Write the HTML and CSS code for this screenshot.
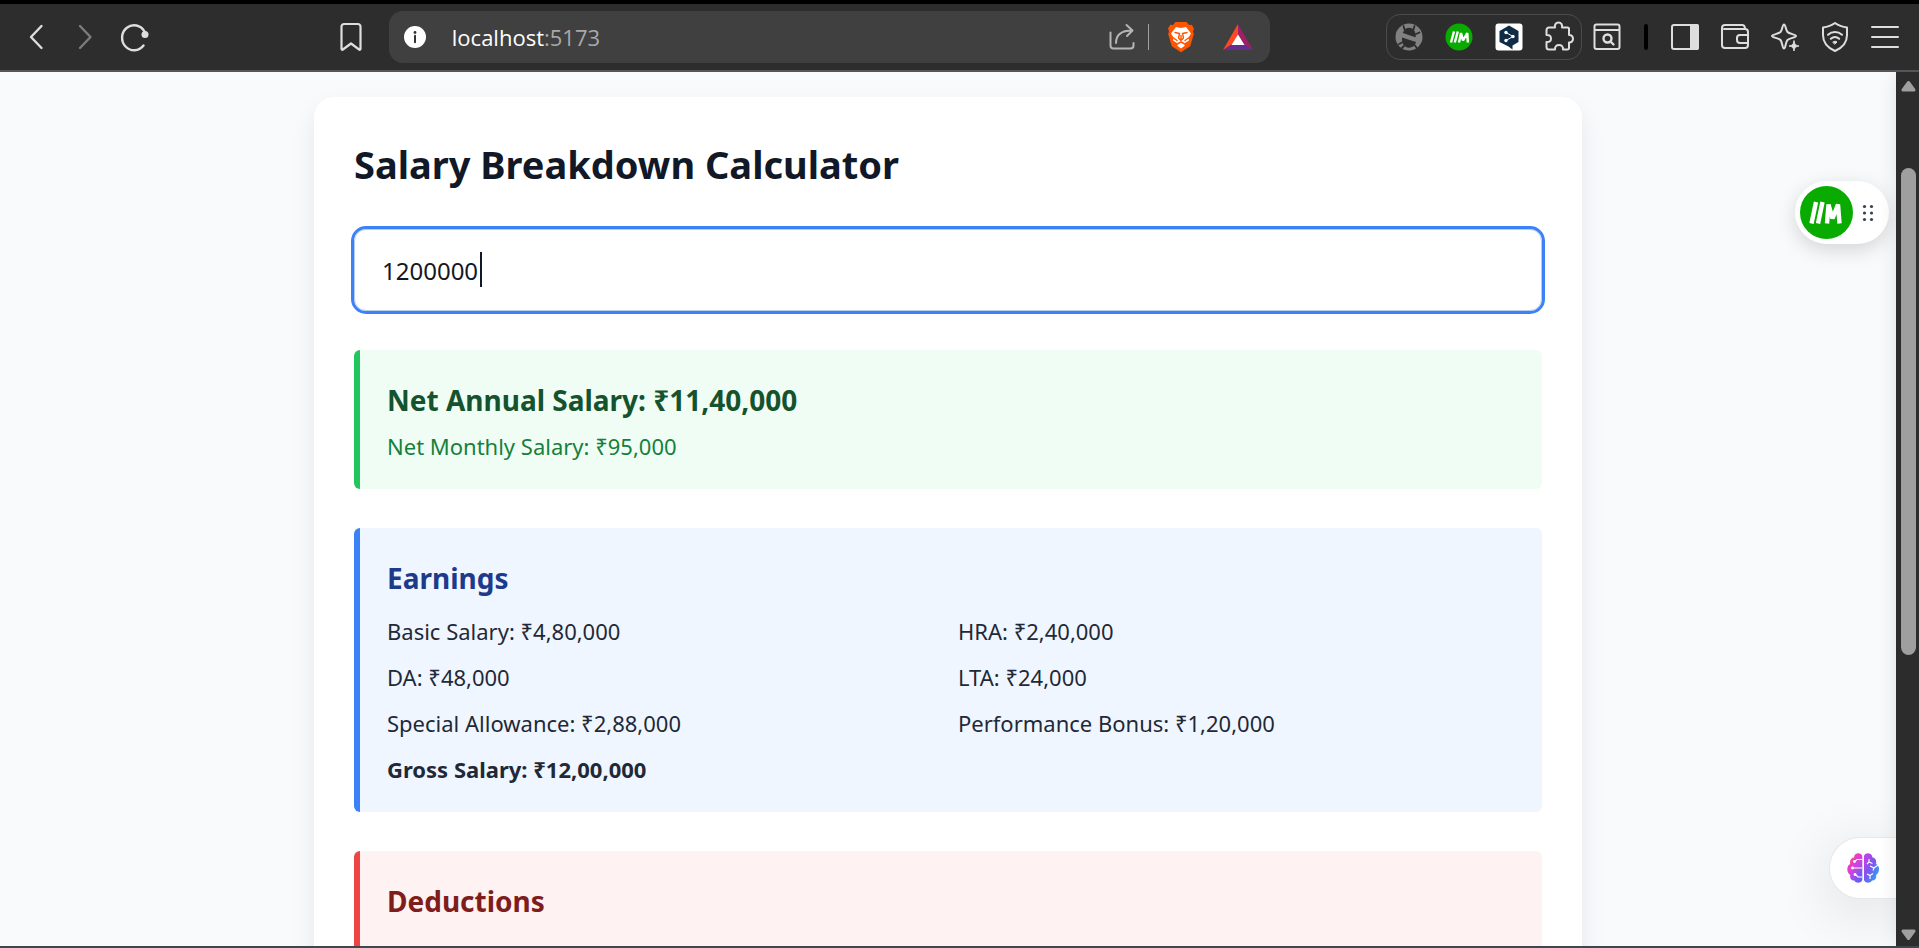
FILE: index.html
```html
<!DOCTYPE html>
<html lang="en">
<head>
<meta charset="utf-8">
<title>Salary Breakdown Calculator</title>
<link rel="stylesheet" href="styles.css">
</head>
<body>
<div class="browser">
  <header class="toolbar">
    <nav class="nav-group" aria-label="Navigation">
      <button class="icon-btn" aria-label="Back"><svg viewBox="0 0 28 28"><path d="M19.500 3 9 14l10.500 11" stroke-width="2.400"/></svg></button>
      <button class="icon-btn dim" aria-label="Forward"><svg viewBox="0 0 28 28"><path d="M9 3l10.500 11L9 25" stroke-width="2.400"/></svg></button>
      <button class="icon-btn" aria-label="Reload"><svg viewBox="0 0 28 28"><path d="M24.500 8.500A12 12.500 0 1 0 23.500 22.500" stroke-width="2.400"/><circle cx="25" cy="11.500" r="3.500" class="solid" stroke="none"/></svg></button>
    </nav>
    <span class="space-left"></span>
    <button class="icon-btn" aria-label="Bookmark"><svg viewBox="0 0 28 28"><path d="M4.500 3.500a2.500 2.500 0 0 1 2.500-2.500h14a2.500 2.500 0 0 1 2.500 2.500V26a.8.8 0 0 1-1.400.5L14 20.500l-8.100 6a.8.8 0 0 1-1.400-.5z" stroke-width="2.200"/></svg></button>
    <div class="address">
      <button class="info" aria-label="Site information"><svg viewBox="0 0 22 22"><circle cx="11" cy="11" r="11" fill="#fff" stroke="none"/><circle cx="11" cy="6.500" r="1.400" fill="#333" stroke="none"/><path d="M11 9.800v6.400" stroke="#333" stroke-width="2"/></svg></button>
      <span class="url">localhost<span class="port">:5173</span></span>
      <button class="icon-btn share" aria-label="Share"><svg viewBox="0 0 28 28"><path d="M2.500 9.500v13a3 3 0 0 0 3 3h17a3 3 0 0 0 3-3v-2.500M8 20c0-8 5-12.500 16-12.500M18.500 2l6 5.500-5.500 5.500"/></svg></button>
      <span class="divider"></span>
      <button class="icon-btn brave" aria-label="Shields"><svg viewBox="0 0 28 32"><path d="M8.500 1h11l2.500 3 2.800-.3 2.200 4-1 2.500.8 3-3.600 12-9.200 6-9.200-6-3.600-12 .8-3-1-2.500 2.200-4L6 4z" fill="#ff5500" stroke="none"/><path d="M9 6l5 1 5-1 5 6.500-2.500 4 .5 3-5.500 3.500 1.500 1.500-4 3-4-3 1.500-1.500L6 19.500l.5-3-2.500-4z" fill="#fff" stroke="none"/><path d="M8 11.500l4.500 1-1 4.500 2.500 2.500 2.500-2.500-1-4.500 4.500-1M6.500 17l3.500 2.500M21.500 17 18 19.500M11 22.500l3-1.500 3 1.500M14 14.500v5" stroke="#ff5500" stroke-width="1.400"/></svg></button>
      <button class="icon-btn bat" aria-label="Rewards"><svg viewBox="0 0 30 28"><path d="M15 1v11L9 22l-9 5z" fill="#ff4724" stroke="none"/><path d="M15 1v11l6 10 9 5z" fill="#9e1f63" stroke="none"/><path d="M0 27l9-6h12l9 6z" fill="#662d91" stroke="none"/><path d="M15 11.500 21.500 22h-13z" fill="#fff" stroke="none"/></svg></button>
    </div>
    <span class="space-right"></span>
    <div class="extensions">
      <button class="icon-btn" aria-label="Blocked tracker"><svg viewBox="0 0 28 28"><circle cx="14" cy="14" r="13.500" fill="#818181" stroke="none"/><path d="M8.500 8.500C9.500 6 11.500 4.800 14 4.800s5 1.500 6 4.200c.8 1.800 1 4 .5 5.500L7.500 11c0-.9.400-1.700 1-2.500zM7 14.500l14 4.500c-.8 3.500-3.500 5.700-7 5.700-4.500 0-7.500-4-7-10.200z" fill="#2d2d2d" stroke="none"/><path d="M9.500 6.500 8.500 3M18.500 6.500l1-3.500M7 19.500l-3 1.500M9 23l-2 2M19.500 22l2 2.500M21 11l3.500-1.500" stroke="#2d2d2d" stroke-width="1.800"/><path d="M2.500 9.500l23 8" stroke="#818181" stroke-width="2.400"/></svg></button>
      <button class="icon-btn" aria-label="Interview assistant"><svg viewBox="0 0 28 28"><circle cx="14" cy="14" r="13.500" fill="#09ab00" stroke="none"/><path d="M6 19.500 9 8.500M9.800 19.500l3-11M14 19.500l2-9.500 2 7.500 4.300-7.500.5 9.500" class="mark" stroke-width="2.400"/></svg></button>
      <button class="icon-btn" aria-label="Translate"><svg viewBox="0 0 28 28"><rect x=".5" y=".5" width="27" height="27" rx="3" fill="#fff" stroke="none"/><path d="M14 2.500l9.500 5.500v11L17.500 22.500V26.500l-4-3L4.500 19V8z" fill="#0f2b46" stroke="none"/><path d="M11 9.500l7 4-7 4" stroke="#fff" stroke-width="1"/><g fill="#fff" stroke="none"><circle cx="11" cy="9.500" r="1.700"/><circle cx="18" cy="13.500" r="1.700"/><circle cx="11" cy="17.500" r="1.700"/></g></svg></button>
      <button class="icon-btn" aria-label="Extensions"><svg viewBox="0 0 28 28"><path d="M4 4.500h6c-.6-3 1-5 3.500-5s4.100 2 3.500 5h5.500a1.500 1.500 0 0 1 1.500 1.500v6c2.500-.2 4 1.400 4 3.700s-1.500 4-4 3.800V25a1.500 1.500 0 0 1-1.500 1.500H18c.3-3-1.500-4.500-4-4.500s-4.200 1.500-4 4.500H4A2.500 2.500 0 0 1 1.500 24v-5c3 .3 4.500-1.200 4.500-3.500S4.500 11.700 1.500 12V7A2.500 2.500 0 0 1 4 4.500z"/></svg></button>
    </div>
    <div class="actions">
      <button class="icon-btn" aria-label="Search page"><svg viewBox="0 0 28 28"><rect x="1.500" y="1.500" width="25" height="24.500" rx="2"/><path d="M2 7h24"/><circle cx="14.500" cy="15.500" r="4" stroke-width="2.400"/><path d="M17.500 18.500l3 3" stroke-width="2.400"/></svg></button>
      <span class="black-bar"></span>
      <button class="icon-btn" aria-label="Sidebar"><svg viewBox="0 0 28 28"><rect x="1" y="2" width="26" height="24" rx="2"/><path d="M20 2h6a1 1 0 0 1 1 1v22a1 1 0 0 1-1 1h-6z" class="solid"/></svg></button>
      <button class="icon-btn" aria-label="Wallet"><svg viewBox="0 0 28 28"><path d="M24 6c0-2.500-1-4-3-4H4a3 3 0 0 0-3 3v17a3 3 0 0 0 3 3h20a3 3 0 0 0 3-3V9a3 3 0 0 0-3-3H3M26.500 12H19a3 3 0 0 0-3 3v2a3 3 0 0 0 3 3h7.500"/></svg></button>
      <button class="icon-btn" aria-label="Assistant"><svg viewBox="0 0 28 28"><path d="M13 1.500c1.600 0 1.700 5.500 3.500 7.500s8.500 2.400 8.500 4-6.500 2-8.500 4-1.900 8.500-3.500 8.500-1.700-6.500-3.500-8.500-8.500-2.400-8.500-4S7.500 11 9.500 9 11.400 1.500 13 1.500z"/><path d="M23 17.500c.8 4 1.500 4.700 5.500 5.500-4 .8-4.700 1.500-5.500 5.500-.8-4-1.500-4.700-5.500-5.500 4-.8 4.700-1.500 5.500-5.500z" stroke="#2d2d2d" stroke-width="3"/><path d="M23 18c.8 3.800 1.400 4.200 5 5-3.600.8-4.200 1.200-5 5-.8-3.800-1.400-4.200-5-5 3.600-.8 4.200-1.200 5-5z" class="solid" stroke-width="1"/></svg></button>
      <button class="icon-btn" aria-label="VPN"><svg viewBox="0 0 28 28"><path d="M14 0c3.500 2.600 7.500 4 12 4.500V12c0 7.500-5 13-12 16C7 25 2 19.500 2 12V4.500C6.500 4 10.500 2.600 14 0z"/><path d="M7 11.800c4-3.600 10-3.600 14 0M9.800 15.800c2.500-2.200 5.900-2.200 8.400 0" stroke-width="2"/><path d="M12 19c1.200-1 2.800-1 4 0l-2 2z" class="solid" stroke-width="1"/></svg></button>
      <button class="icon-btn" aria-label="Menu"><svg viewBox="0 0 28 28"><path d="M1 4h26M1 14h26M1 24h26"/></svg></button>
    </div>
  </header>

  <div class="viewport">
    <main class="page">
      <div class="card">
        <h1 class="title">Salary Breakdown Calculator</h1>
        <div class="field">
          <input class="ctc" type="text" inputmode="numeric" aria-label="Annual CTC" value="1200000">
          <span class="caret"></span>
        </div>
        <section class="panel net">
          <h2 class="heading">Net Annual Salary: ₹11,40,000</h2>
          <p class="line">Net Monthly Salary: ₹95,000</p>
        </section>
        <section class="panel earnings">
          <h2 class="heading">Earnings</h2>
          <div class="grid">
            <p class="line">Basic Salary: ₹4,80,000</p>
            <p class="line">HRA: ₹2,40,000</p>
            <p class="line">DA: ₹48,000</p>
            <p class="line">LTA: ₹24,000</p>
            <p class="line">Special Allowance: ₹2,88,000</p>
            <p class="line">Performance Bonus: ₹1,20,000</p>
            <p class="line total">Gross Salary: ₹12,00,000</p>
          </div>
        </section>
        <section class="panel deductions">
          <h2 class="heading">Deductions</h2>
        </section>
      </div>
    </main>

    <div class="float-pill">
      <button class="float-logo" aria-label="Open interview assistant"><svg viewBox="0 0 53 53"><circle cx="26.500" cy="26.500" r="26.500" fill="#09ab00"/><path d="M11.500 37.500 16 16M18 37.500 22.500 16M27 37.500l1.500-19 4 14L38 18.500l1.500 19" class="mark" stroke-width="4.400"/></svg></button>
      <svg class="grip" viewBox="0 0 12 18"><g fill="#374151"><circle cx="2.500" cy="2.500" r="1.600"/><circle cx="9.500" cy="2.500" r="1.600"/><circle cx="2.500" cy="9" r="1.600"/><circle cx="9.500" cy="9" r="1.600"/><circle cx="2.500" cy="15.500" r="1.600"/><circle cx="9.500" cy="15.500" r="1.600"/></g></svg>
    </div>

    <button class="brain" aria-label="Open AI helper">
      <svg viewBox="0 0 32 30">
        <defs><linearGradient id="bl" x1="0" y1="0" x2=".7" y2="1"><stop offset=".08" stop-color="#f5a81c"/><stop offset=".34" stop-color="#ee3bc8"/><stop offset=".55" stop-color="#cf45dc"/><stop offset=".95" stop-color="#6a5cf5"/></linearGradient><linearGradient id="br" x1="0" y1="0" x2="1" y2="1"><stop offset="0" stop-color="#d63be0"/><stop offset=".45" stop-color="#7a58ee"/><stop offset=".85" stop-color="#2fa0fa"/></linearGradient></defs>
        <path d="M15.300 3v24c-1 3.500-6.500 3.500-8 .5-3 .5-5-2.500-4-5.500-4-2.500-4-9.500 0-11C2 7.500 4.500 4.500 7 4.500 7-.5 14-1 15.300 3z" fill="url(#bl)"/>
        <path d="M17 3v24c1 3.500 6.500 3.500 8 .5 3 .5 5-2.500 4-5.500 4-2.500 4-9.500 0-11C30 7.500 28 4.500 25.500 4.500 25-.5 18-1 17 3z" fill="url(#br)"/>
        <g fill="none" stroke="#fff" stroke-width="1.100"><path d="M15 6.500h-5L7 9M15 15H6M15 24h-4l-3-3M22 6v3l-2 2M22 9l3.500 1.500M31 12l-4 3-4-2M27 15l-1 2.500M20 21l3 1.500 3-2M23 22.500V26"/></g>
        <g fill="#fff"><circle cx="7.500" cy="8.500" r="1.400"/><circle cx="5.500" cy="15" r="1.400"/><circle cx="8" cy="21.500" r="1.400"/></g>
      </svg>
    </button>

    <div class="scrollbar">
      <svg class="arrow" viewBox="0 0 15 12"><path d="M7.500 2.500 13 10H2z"/></svg>
      <div class="track"><div class="thumb"></div></div>
      <svg class="arrow" viewBox="0 0 15 12"><path d="M7.500 9.500 13 2H2z"/></svg>
    </div>
  </div>
</div>
</body>
</html>
```
FILE: styles.css
```css
* { box-sizing: border-box; }

body {
  margin: 0;
  font-family: "Noto Sans", "Open Sans", sans-serif;
  color: #1f2937;
}

h1, h2, p { margin: 0; }

button {
  padding: 0;
  border: 0;
  background: none;
  font: inherit;
}

.browser {
  display: flex;
  flex-direction: column;
  height: 100vh;
  overflow: hidden;
  border-top: 4px solid #000;
  border-bottom: 2px solid #41454d;
}

/* Toolbar */
.toolbar {
  display: flex;
  align-items: center;
  flex: none;
  height: 68px;
  padding: 0 20px 0 22px;
  background: #2d2d2d;
  border-bottom: 2px solid #575557;
}

.nav-group { display: flex; gap: 21px; }
.space-left { flex: 13 1 0; }
.space-right { flex: 8 1 0; }

.icon-btn {
  display: block;
  flex: none;
  width: 28px;
  height: 28px;
  color: #dedede;
}

.icon-btn svg,
.info svg {
  display: block;
  width: 100%;
  height: 100%;
  overflow: visible;
  fill: none;
  stroke: currentColor;
  stroke-width: 2;
  stroke-linecap: round;
  stroke-linejoin: round;
}

.icon-btn .solid { fill: currentColor; }
.dim { color: #7c7c7c; }
.mark {
  fill: none;
  stroke: #fff;
  stroke-linecap: butt;
  stroke-linejoin: bevel;
}

.address {
  display: flex;
  align-items: center;
  flex: 0 1 881px;
  height: 52px;
  margin-left: 24px;
  padding: 0 17px 0 15px;
  border-radius: 14px;
  background: #404040;
}

.info { flex: none; width: 22px; height: 22px; }

.url {
  flex: 1;
  margin-left: 26px;
  font-family: "Open Sans", "Noto Sans", sans-serif;
  font-size: 22px;
  line-height: 30px;
  color: #fff;
}

.port { color: #a9a9a9; }
.share { color: #b5b5b5; }
.divider { width: 1px; height: 26px; margin: 0 18px 0 12px; background: #a0a0a0; }
.brave { height: 32px; }
.bat { width: 30px; margin-left: 28px; }

.extensions {
  display: flex;
  gap: 22px;
  padding: 8px;
  border: 1px solid #4c4c4c;
  border-radius: 14px;
}

.actions {
  display: flex;
  align-items: center;
  gap: 22px;
  margin-left: 11px;
}

.black-bar { width: 4px; height: 26px; margin: 0 1px; border-radius: 2px; background: #000; }

/* Page */
.viewport {
  position: relative;
  display: flex;
  flex: 1;
  min-height: 0;
  overflow: hidden;
  background: #f9fafc;
}

.page { flex: 1; padding: 25px 40px 0; }

.card {
  display: flex;
  flex-direction: column;
  max-width: 1268px;
  min-height: 110%;
  margin: 0 auto;
  padding: 40px;
  border-radius: 20px;
  background: #fff;
  box-shadow: 0 12px 24px rgba(15, 23, 42, 0.08);
}

.title {
  font-size: 38px;
  line-height: 54px;
  font-weight: 700;
  color: #111827;
}

.field { position: relative; margin: 38px 0 39px; }

.ctc {
  display: block;
  width: 100%;
  height: 82px;
  padding: 0 27px;
  border: 1px solid #b9cdec;
  border-radius: 12px;
  outline: 3px solid #3b82f6;
  background: #fff;
  font: inherit;
  font-size: 24px;
  color: #111827;
}

.caret {
  position: absolute;
  top: 23px;
  left: 126px;
  width: 2px;
  height: 35px;
  background: #111827;
}

.panel {
  padding: 30px 27px;
  border-left: 6px solid;
  border-radius: 6px;
}

.panel + .panel { margin-top: 39px; }

.heading { font-size: 28px; line-height: 40px; font-weight: 700; }
.line { font-size: 22px; line-height: 32px; }

.net { padding-bottom: 27px; background: #f0fdf4; border-color: #22c55e; color: #15803d; }
.net .heading { color: #14532d; }
.net .line { margin-top: 10px; }

.earnings { padding-bottom: 27px; background: #eff6ff; border-color: #3b82f6; }
.earnings .heading { color: #1e3a8a; }

.grid {
  display: grid;
  grid-template-columns: 1fr 1fr;
  gap: 14px;
  margin-top: 17px;
}

.total { font-weight: 700; }

.deductions { flex: 1; background: #fef2f2; border-color: #ef4444; }
.deductions .heading { color: #7f1d1d; }

/* Floating widgets */
.float-pill {
  position: absolute;
  top: 109px;
  right: 30px;
  display: flex;
  align-items: center;
  gap: 9px;
  width: 94px;
  height: 63px;
  padding: 5px;
  border-radius: 32px;
  background: #fff;
  box-shadow: 0 6px 20px rgba(0, 0, 0, 0.15);
}

.float-logo { width: 53px; height: 53px; }
.float-logo svg { display: block; }
.grip { width: 12px; height: 18px; }

.brain {
  position: absolute;
  right: 23px;
  bottom: 47px;
  display: flex;
  align-items: center;
  width: 67px;
  height: 62px;
  padding-left: 17px;
  border: 1px solid #e8e8ea;
  border-right: 0;
  border-radius: 31px 0 0 31px;
  background: #fff;
  box-shadow: 0 12px 60px rgba(0, 0, 0, 0.12);
}

.brain svg { width: 32px; height: 30px; }

/* Scrollbar */
.scrollbar {
  position: relative;
  display: flex;
  flex-direction: column;
  align-items: center;
  flex: none;
  width: 23px;
  padding: 8px 0 5px 2px;
  background: #2c2c2c;
  box-shadow: 0 0 20px rgba(15, 23, 42, 0.1);
}

.arrow { width: 15px; height: 12px; overflow: visible; }
.arrow path { fill: #9f9f9f; stroke: #9f9f9f; stroke-width: 3; stroke-linejoin: round; }
.track { flex: 1; width: 15px; padding-top: 76px; }
.thumb { height: 64%; border-radius: 8px; background: #9f9f9f; }
```
